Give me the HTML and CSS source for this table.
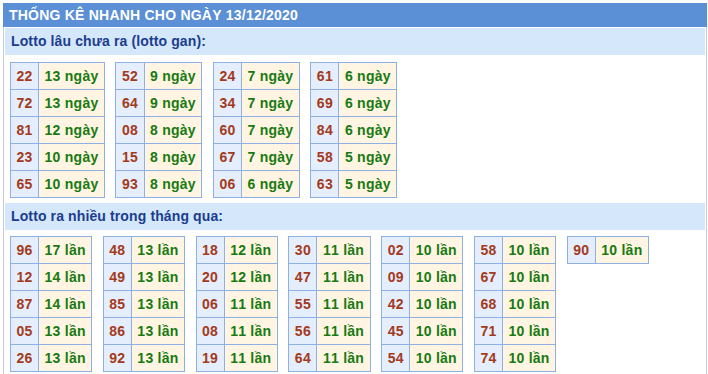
FILE: index.html
```html
<!DOCTYPE html>
<html lang="vi">
<head>
<meta charset="utf-8">
<title>Thống kê nhanh</title>
<link rel="stylesheet" href="styles.css">
</head>
<body>
<div class="box">
  <div class="title">THỐNG KÊ NHANH CHO NGÀY 13/12/2020</div>
  <div class="content">
    <div class="sub">Lotto lâu chưa ra (lotto gan):</div>
    <div class="tables first">
      <table class="stat"><tr><td class="n">22</td><td class="v">13 ngày</td></tr><tr><td class="n">72</td><td class="v">13 ngày</td></tr><tr><td class="n">81</td><td class="v">12 ngày</td></tr><tr><td class="n">23</td><td class="v">10 ngày</td></tr><tr><td class="n">65</td><td class="v">10 ngày</td></tr></table>
      <table class="stat"><tr><td class="n">52</td><td class="v">9 ngày</td></tr><tr><td class="n">64</td><td class="v">9 ngày</td></tr><tr><td class="n">08</td><td class="v">8 ngày</td></tr><tr><td class="n">15</td><td class="v">8 ngày</td></tr><tr><td class="n">93</td><td class="v">8 ngày</td></tr></table>
      <table class="stat"><tr><td class="n">24</td><td class="v">7 ngày</td></tr><tr><td class="n">34</td><td class="v">7 ngày</td></tr><tr><td class="n">60</td><td class="v">7 ngày</td></tr><tr><td class="n">67</td><td class="v">7 ngày</td></tr><tr><td class="n">06</td><td class="v">6 ngày</td></tr></table>
      <table class="stat"><tr><td class="n">61</td><td class="v">6 ngày</td></tr><tr><td class="n">69</td><td class="v">6 ngày</td></tr><tr><td class="n">84</td><td class="v">6 ngày</td></tr><tr><td class="n">58</td><td class="v">5 ngày</td></tr><tr><td class="n">63</td><td class="v">5 ngày</td></tr></table>
    </div>
    <div class="sub">Lotto ra nhiều trong tháng qua:</div>
    <div class="tables second">
      <table class="stat"><tr><td class="n">96</td><td class="v">17 lần</td></tr><tr><td class="n">12</td><td class="v">14 lần</td></tr><tr><td class="n">87</td><td class="v">14 lần</td></tr><tr><td class="n">05</td><td class="v">13 lần</td></tr><tr><td class="n">26</td><td class="v">13 lần</td></tr></table>
      <table class="stat"><tr><td class="n">48</td><td class="v">13 lần</td></tr><tr><td class="n">49</td><td class="v">13 lần</td></tr><tr><td class="n">85</td><td class="v">13 lần</td></tr><tr><td class="n">86</td><td class="v">13 lần</td></tr><tr><td class="n">92</td><td class="v">13 lần</td></tr></table>
      <table class="stat"><tr><td class="n">18</td><td class="v">12 lần</td></tr><tr><td class="n">20</td><td class="v">12 lần</td></tr><tr><td class="n">06</td><td class="v">11 lần</td></tr><tr><td class="n">08</td><td class="v">11 lần</td></tr><tr><td class="n">19</td><td class="v">11 lần</td></tr></table>
      <table class="stat"><tr><td class="n">30</td><td class="v">11 lần</td></tr><tr><td class="n">47</td><td class="v">11 lần</td></tr><tr><td class="n">55</td><td class="v">11 lần</td></tr><tr><td class="n">56</td><td class="v">11 lần</td></tr><tr><td class="n">64</td><td class="v">11 lần</td></tr></table>
      <table class="stat"><tr><td class="n">02</td><td class="v">10 lần</td></tr><tr><td class="n">09</td><td class="v">10 lần</td></tr><tr><td class="n">42</td><td class="v">10 lần</td></tr><tr><td class="n">45</td><td class="v">10 lần</td></tr><tr><td class="n">54</td><td class="v">10 lần</td></tr></table>
      <table class="stat"><tr><td class="n">58</td><td class="v">10 lần</td></tr><tr><td class="n">67</td><td class="v">10 lần</td></tr><tr><td class="n">68</td><td class="v">10 lần</td></tr><tr><td class="n">71</td><td class="v">10 lần</td></tr><tr><td class="n">74</td><td class="v">10 lần</td></tr></table>
      <table class="stat"><tr><td class="n">90</td><td class="v">10 lần</td></tr></table>
    </div>
  </div>
</div>
</body>
</html>
```

FILE: styles.css
```css
html, body {
  margin: 0;
  padding: 0;
  background: #ffffff;
}
body {
  font-family: "Liberation Sans", Arial, sans-serif;
  font-size: 14px;
  font-weight: bold;
  font-kerning: none;
}
.box {
  width: 704px;
  margin: 3px 0 0 3px;
}
.title {
  height: 24px;
  line-height: 24px;
  padding: 0 6px;
  background: #5b8fd6;
  color: #ffffff;
  letter-spacing: 0.22px;
}
.content {
  border-left: 1px solid #c7ccd4;
  border-right: 1px solid #c7ccd4;
  padding: 1px 1px 0;
  height: 350px;
  box-sizing: border-box;
}
.sub {
  height: 27px;
  line-height: 27px;
  padding: 0 6px;
  background: #d5e7fb;
  color: #1b3d8f;
  letter-spacing: 0.12px;
}
.tables {
  display: flex;
  align-items: flex-start;
  padding-left: 5px;
}
.tables.first {
  gap: 10.5px;
  margin: 7px 0 5px;
}
.tables.second {
  gap: 10.5px;
  margin: 6px 0 0;
}
.stat {
  border-collapse: collapse;
}
.stat td {
  border: 1px solid #8fb0e2;
  padding: 5px 5.5px;
  line-height: 16px;
  letter-spacing: 0.25px;
  white-space: nowrap;
}
.stat .n {
  background: #e5eefd;
  color: #a33a1c;
}
.stat .v {
  background: #fff5e2;
  color: #187a12;
}
```
